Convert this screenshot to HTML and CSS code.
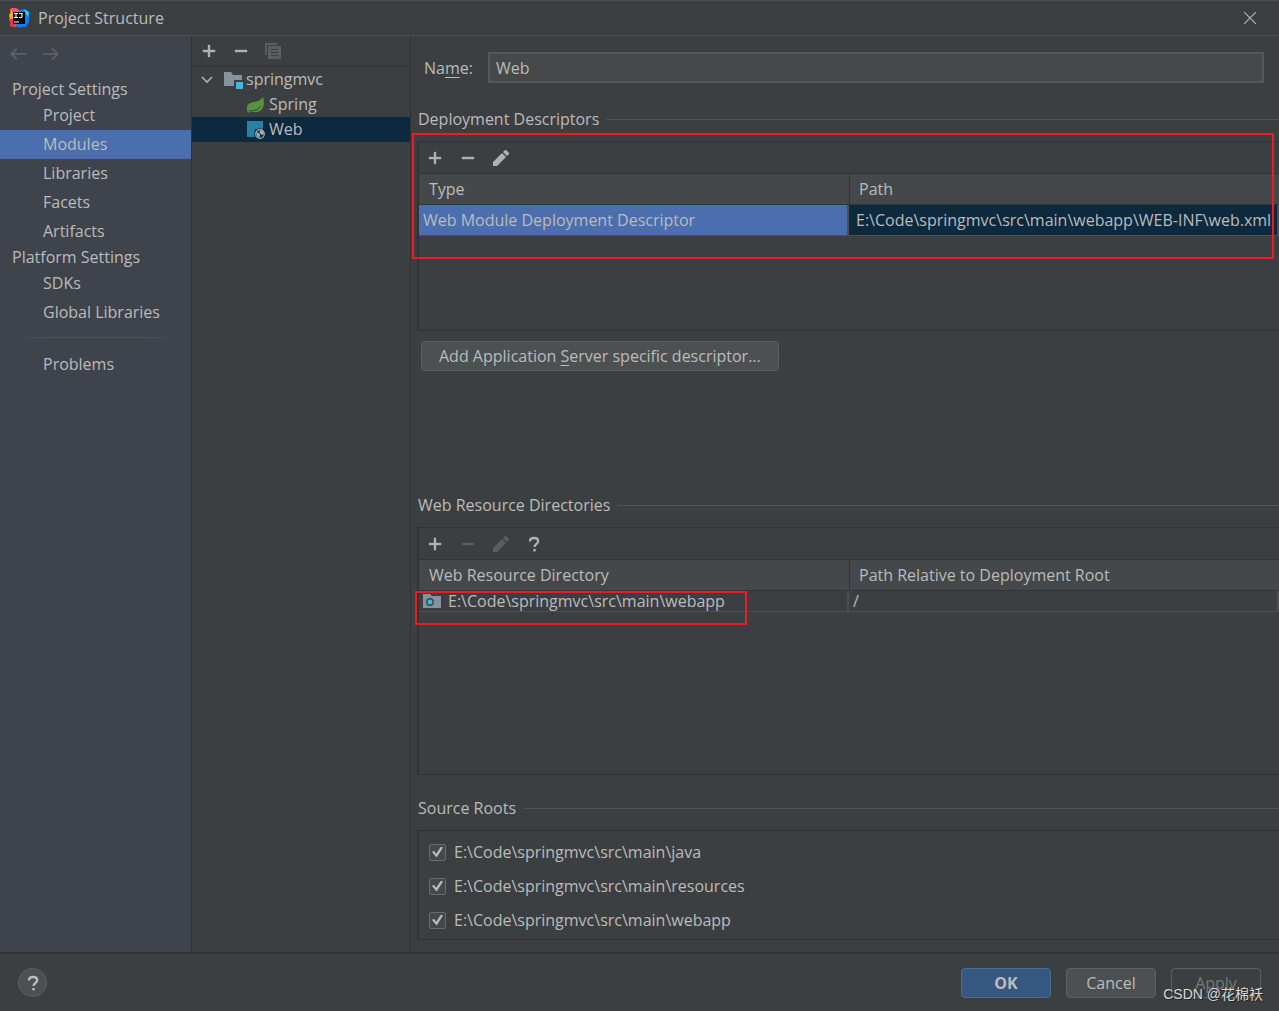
FILE: index.html
```html
<!DOCTYPE html>
<html lang="en">
<head>
<meta charset="utf-8">
<title>Project Structure</title>
<link rel="stylesheet" href="styles.css">
</head>
<body>
<svg class="sprite" aria-hidden="true">
  <symbol id="i-add" viewBox="0 0 16 16"><path d="M7 2h2v5h5v2H9v5H7V9H2V7h5z" fill="currentColor" stroke="currentColor" stroke-width=".4"/></symbol>
  <symbol id="i-remove" viewBox="0 0 16 16"><path d="M2 7h12v2H2z" fill="currentColor" stroke="currentColor" stroke-width=".4"/></symbol>
  <symbol id="i-edit" viewBox="0 0 16 16"><path d="M0 16v-4L9 3l4 4-9 9zM10 2l1.600-1.600a1.400 1.400 0 0 1 2 0l2 2a1.400 1.400 0 0 1 0 2L14 6z" fill="currentColor"/></symbol>
  <symbol id="i-copy" viewBox="0 0 16 16"><path d="M0 0h12v2H2v10H0z" fill="currentColor"/><path fill-rule="evenodd" d="M3 3h13v13H3zM6 6v1h7V6zM6 9v1h7V9zM6 12v1h7v-1z" fill="currentColor"/></symbol>
  <symbol id="i-help" viewBox="0 0 16 16"><path d="M4 5.500C4 3 5.700 2 8 2s4.200 1.200 4.200 3.200C12.200 7.700 8.500 8 8.500 11" fill="none" stroke="currentColor" stroke-width="2.300"/><path d="M7.300 13h2.400v2.400H7.300z" fill="currentColor"/></symbol>
  <symbol id="i-back" viewBox="0 0 16 14"><path d="M16 7H1M7 1.500L1.200 7 7 12.500" fill="none" stroke="currentColor" stroke-width="2"/></symbol>
</svg>

<header class="titlebar">
  <svg class="logo" viewBox="0 0 20 20" aria-hidden="true">
    <path d="M1 1l6-1 4 3-3 14-1 2-6-1 1-4-2-2 2-4z" fill="#fc801d"/>
    <path d="M0 12l4-2 3 7-1 2-5-1 1-3z" fill="#fe2857"/>
    <path d="M2 0l5 0 4 3-7 3z" fill="#f0507c"/>
    <path d="M0 7l3-4 1 7-3 1z" fill="#fdb60d"/>
    <path d="M11 2l4-1 5 3v10l-3 5-4 0-3 1-3-2z" fill="#087cfa"/>
    <path d="M15 1l5 3-1 5-3-5z" fill="#21d0f5"/>
    <path d="M4 4h12v12H4z" fill="#080405"/>
    <path d="M5 5.500h4M7 5.500v4M5 9.500h4M10 5.500h3v3q0 1-1 1h-2M5 14h5" fill="none" stroke="#fff" stroke-width="1.100"/>
  </svg>
  <h1>Project Structure</h1>
  <button class="icon-btn close" aria-label="Close"><svg viewBox="0 0 12 12"><path d="M0 0l12 12M12 0L0 12" fill="none" stroke="currentColor" stroke-width="1.200"/></svg></button>
</header>

<div class="workspace">
  <nav class="sidebar">
    <div class="history">
      <button class="icon-btn" aria-label="Back" disabled><svg viewBox="0 0 16 14"><use href="#i-back"/></svg></button>
      <button class="icon-btn forward" aria-label="Forward" disabled><svg viewBox="0 0 16 14"><use href="#i-back"/></svg></button>
    </div>
    <h2>Project Settings</h2>
    <ul>
      <li><a href="#project">Project</a></li>
      <li><a href="#modules" class="active">Modules</a></li>
      <li><a href="#libraries">Libraries</a></li>
      <li><a href="#facets">Facets</a></li>
      <li><a href="#artifacts">Artifacts</a></li>
    </ul>
    <h2>Platform Settings</h2>
    <ul>
      <li><a href="#sdks">SDKs</a></li>
      <li><a href="#global">Global Libraries</a></li>
    </ul>
    <hr>
    <ul>
      <li><a href="#problems">Problems</a></li>
    </ul>
  </nav>

  <section class="modules">
    <div class="toolbar">
      <button class="icon-btn" aria-label="Add"><svg><use href="#i-add"/></svg></button>
      <button class="icon-btn" aria-label="Remove"><svg><use href="#i-remove"/></svg></button>
      <button class="icon-btn" aria-label="Copy" disabled><svg><use href="#i-copy"/></svg></button>
    </div>
    <ul class="tree">
      <li class="root">
        <svg class="chevron" viewBox="0 0 12 8"><path d="M1 1l5 5 5-5" fill="none" stroke="#afb1b3" stroke-width="1.600"/></svg>
        <svg class="node" viewBox="0 0 20 18"><path d="M0 1h7l2 3h9v5h-8v6H0z" fill="#87939a"/><path d="M12 11h7v7h-7z" fill="#40b6e0"/></svg>
        <span>springmvc</span>
      </li>
      <li>
        <svg class="node" viewBox="0 0 20 18"><path d="M17 1c2 6 1 15-7 15H4l-2 1C-1 10 2 7 8 6c4-.6 7-2 9-5z" fill="#55943f"/><path d="M3 15c5 0 9-1 12-5" fill="none" stroke="#3c3f41" stroke-width="1"/></svg>
        <span>Spring</span>
      </li>
      <li class="selected">
        <svg class="node" viewBox="0 0 20 18"><path d="M1 0h16v8H9v8H1z" fill="#2d7fa3"/><circle cx="14" cy="13" r="5.800" fill="#0d293e"/><circle cx="14" cy="13" r="4.300" fill="none" stroke="#a6b0b7" stroke-width="1.200"/><path d="M10 11l2 .5 2 2-.5 3.500-2-1.500zM14 9l3 1 1 3-2 1-2.500-2z" fill="#a6b0b7"/></svg>
        <span>Web</span>
      </li>
    </ul>
  </section>

  <main class="details">
    <div class="name-row">
      <label for="name">Na<u>m</u>e:</label>
      <input id="name" type="text" value="Web">
    </div>

    <section>
      <h2 class="rule">Deployment Descriptors</h2>
      <div class="panel descriptors">
        <div class="toolbar">
          <button class="icon-btn" aria-label="Add"><svg><use href="#i-add"/></svg></button>
          <button class="icon-btn" aria-label="Remove"><svg><use href="#i-remove"/></svg></button>
          <button class="icon-btn" aria-label="Edit"><svg><use href="#i-edit"/></svg></button>
        </div>
        <table>
          <thead><tr><th>Type</th><th>Path</th></tr></thead>
          <tbody><tr class="picked"><td>Web Module Deployment Descriptor</td><td>E:\Code\springmvc\src\main\webapp\WEB-INF\web.xml</td></tr></tbody>
        </table>
        <div class="mark mark-table"></div>
      </div>
      <button class="btn add-server">Add Application <u>S</u>erver specific descriptor...</button>
    </section>

    <section class="resources-section">
      <h2 class="rule">Web Resource Directories</h2>
      <div class="panel resources">
        <div class="toolbar">
          <button class="icon-btn" aria-label="Add"><svg><use href="#i-add"/></svg></button>
          <button class="icon-btn" aria-label="Remove" disabled><svg><use href="#i-remove"/></svg></button>
          <button class="icon-btn" aria-label="Edit" disabled><svg><use href="#i-edit"/></svg></button>
          <button class="icon-btn" aria-label="Help"><svg><use href="#i-help"/></svg></button>
        </div>
        <table class="compact">
          <thead><tr><th>Web Resource Directory</th><th>Path Relative to Deployment Root</th></tr></thead>
          <tbody><tr>
            <td><div class="dir"><svg viewBox="0 0 18 14"><path d="M0 0h7l2 2h9v12H0z" fill="#87939a"/><circle cx="7" cy="8" r="3.200" fill="#40b6e0" stroke="#34474f" stroke-width="1.400"/></svg><span>E:\Code\springmvc\src\main\webapp</span></div></td>
            <td>/</td>
          </tr></tbody>
        </table>
        <div class="mark mark-row"></div>
      </div>
    </section>

    <section>
      <h2 class="rule">Source Roots</h2>
      <div class="panel roots">
        <label><input type="checkbox" checked><span>E:\Code\springmvc\src\main\java</span></label>
        <label><input type="checkbox" checked><span>E:\Code\springmvc\src\main\resources</span></label>
        <label><input type="checkbox" checked><span>E:\Code\springmvc\src\main\webapp</span></label>
      </div>
    </section>
  </main>
</div>

<footer class="actions">
  <button class="help" aria-label="Help"><svg viewBox="0 0 16 16"><use href="#i-help"/></svg></button>
  <button class="btn primary">OK</button>
  <button class="btn">Cancel</button>
  <button class="btn" disabled>Apply</button>
  <span class="watermark">CSDN @花棉袄</span>
</footer>
</body>
</html>
```
FILE: styles.css
```css
* { box-sizing: border-box; }
body {
  margin: 0;
  min-height: 100vh;
  display: flex;
  flex-direction: column;
  background: #3c3f41;
  color: #bbbbbb;
  font: 16px/24px "Open Sans", "Noto Sans", "Noto Sans CJK SC", sans-serif;
  overflow-x: hidden;
}
h1, h2, ul { margin: 0; padding: 0; font-size: 16px; font-weight: 400; }
ul { list-style: none; }
button, input { font: inherit; color: inherit; }
.sprite { display: none; }
u { text-underline-offset: 3px; }

.icon-btn {
  display: flex;
  align-items: center;
  justify-content: center;
  width: 16px;
  height: 16px;
  padding: 0;
  border: 0;
  background: none;
  color: #afb1b3;
}
.icon-btn:disabled { color: #5b5d5f; }
.icon-btn svg { width: 16px; height: 16px; }

.titlebar {
  display: flex;
  align-items: center;
  height: 36px;
  padding: 0 21px 0 9px;
  gap: 9px;
  border-top: 1px solid #4b4e50;
  border-bottom: 1px solid #4f5254;
}
.titlebar h1 { flex: 1; }
.logo { width: 20px; height: 20px; }
.close svg { width: 12px; height: 12px; }

.workspace { flex: 1; display: flex; }

.sidebar {
  flex: 0 0 192px;
  background: #3f434c;
  border-right: 1px solid #323232;
}
.history { display: flex; gap: 17px; padding: 10px 10px 8px; height: 42px; }
.forward svg { transform: scaleX(-1); }
.sidebar h2 { padding-left: 12px; line-height: 23px; }
.sidebar a {
  display: block;
  padding-left: 43px;
  line-height: 29px;
  color: inherit;
  text-decoration: none;
}
.sidebar .active { background: #4b6eaf; }
.sidebar hr {
  height: 1px;
  margin: 10px 10px 12px;
  border: 0;
  background: linear-gradient(90deg, transparent, #515355 25%, #515355 75%, transparent);
}

.modules { flex: 0 0 219px; border-right: 1px solid #323232; }
.toolbar {
  display: flex;
  align-items: center;
  gap: 17px;
  height: 31px;
  padding: 0 8px;
  border-bottom: 1px solid #323232;
}
.modules .toolbar { gap: 16px; padding-left: 9px; }
.tree li {
  display: flex;
  align-items: center;
  gap: 3px;
  height: 25px;
  padding-left: 54px;
  line-height: 23px;
}
.tree .root { padding-left: 9px; gap: 2px; }
.tree .selected { background: #0d293e; }
.chevron { width: 12px; height: 8px; margin-right: 9px; }
.node { width: 20px; height: 18px; }

.details {
  flex: 1;
  min-width: 0;
  display: flex;
  flex-direction: column;
  padding: 16px 0 12px 6px;
}
.name-row { display: flex; align-items: center; gap: 15px; padding: 0 15px 0 7px; margin-bottom: 24px; }
.name-row input {
  flex: 1;
  min-width: 0;
  height: 31px;
  padding: 0 6px;
  border: 2px solid #55585a;
  background: #45494a;
}
.rule { display: flex; align-items: center; gap: 7px; margin-bottom: 10px; padding-left: 1px; }
.rule::after { content: ""; flex: 1; height: 1px; background: #515456; }

.panel {
  position: relative;
  border: solid #323232;
  border-width: 1px 0 1px 2px;
}
.panel .toolbar { height: 32px; }
.descriptors { height: 190px; }
.resources { flex: 1; min-height: 120px; }
.resources-section { flex: 1; display: flex; flex-direction: column; padding-top: 122px; margin-bottom: 21px; }

table { width: 100%; table-layout: fixed; border-collapse: separate; border-spacing: 0; }
th {
  height: 31px;
  padding: 0 10px;
  background: #45484a;
  border-bottom: 1px solid #323537;
  text-align: left;
  font-weight: 400;
}
th + th { border-left: 1px solid #323537; padding-left: 9px; }
td {
  height: 31px;
  padding: 0 4px;
  border-right: 2px solid #4d5052;
  border-bottom: 1px solid #4d5052;
  white-space: nowrap;
}
td + td { padding-left: 7px; }
.picked td { background: #4b6eaf; }
.picked td + td { background: #0d293e; }
.compact td { height: 21px; line-height: 20px; }
.compact td + td { padding-left: 4px; }
.dir { display: flex; align-items: center; gap: 7px; height: 20px; overflow: hidden; }
.dir svg { width: 18px; height: 14px; }

.mark { position: absolute; border: 2px solid #ed1c24; pointer-events: none; }
.mark-table { top: -9px; left: -7px; right: 5px; height: 126px; }
.mark-row { top: 63px; left: -4px; width: 332px; height: 34px; }

.btn {
  min-width: 90px;
  height: 30px;
  padding: 0 17px;
  border: 1px solid #5e6163;
  border-radius: 4px;
  background: #4c5052;
}
.btn:disabled { background: transparent; color: #777777; }
.btn.primary { background: #365880; border-color: #4c708c; font-weight: 700; }
.add-server { display: block; margin: 10px 0 0 4px; }

.roots { display: flex; flex-direction: column; gap: 10px; padding: 9px 10px 7px; }
.roots label { display: flex; align-items: center; gap: 8px; }
.roots input {
  appearance: none;
  width: 17px;
  height: 17px;
  margin: 0;
  border: 1px solid #6b6b6b;
  border-radius: 2px;
  background: #43494a;
  display: grid;
  place-items: center;
}
.roots input:checked::before {
  content: "";
  width: 11px;
  height: 11px;
  background: #bbbbbb;
  clip-path: polygon(0 50%, 17% 38%, 38% 65%, 82% 0, 100% 10%, 42% 100%);
}

.actions {
  position: relative;
  display: flex;
  align-items: center;
  gap: 15px;
  height: 59px;
  padding: 0 18px;
  border-top: 2px solid #323232;
}
.help {
  display: grid;
  place-items: center;
  width: 29px;
  height: 29px;
  margin-right: auto;
  padding: 0;
  border: 1px solid #5e6163;
  border-radius: 50%;
  background: #4c5052;
  color: #bbbbbb;
}
.help svg { width: 16px; height: 16px; }
.watermark {
  position: absolute;
  right: 16px;
  bottom: 5px;
  font: 14px/24px "Liberation Sans", "Noto Sans CJK SC", sans-serif;
  color: #d8d8d8;
  text-shadow: 1px 1px 1px #222222;
}
```
